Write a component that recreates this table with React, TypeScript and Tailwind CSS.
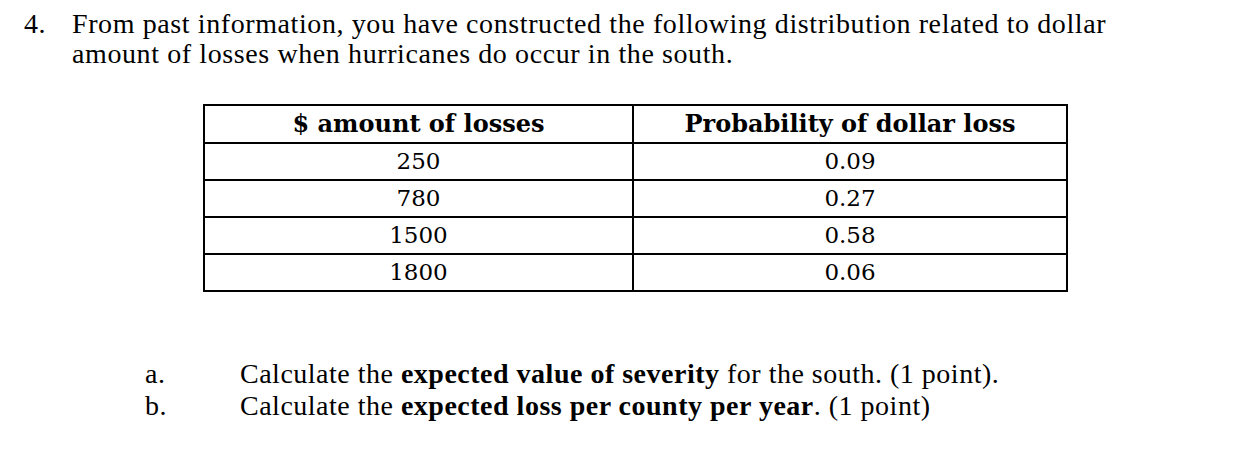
const rows = [
  ["250", "0.09"],
  ["780", "0.27"],
  ["1500", "0.58"],
  ["1800", "0.06"],
];

const App = () => {
  return (
    <div
      className="w-[1250px] h-[452px] bg-white text-black overflow-hidden"
      style={{ fontFamily: '"Liberation Serif", "DejaVu Serif", serif' }}
    >
      {/* question */}
      <div className="flex pt-[9px] pl-[24px] text-[28px] leading-[30px] tracking-[0.6px]">
        <div className="w-[48px]">4.</div>
        <div>
          From past information, you have constructed the following distribution related to dollar
          <br />
          amount of losses when hurricanes do occur in the south.
        </div>
      </div>

      {/* table */}
      <div className="ml-[203px] mt-[35px] w-[865px] border-2 border-black">
        <div className="flex h-[36px] items-center text-[24px] font-bold font-['DejaVu_Serif']">
          <div className="w-[427px] text-center">$ amount of losses</div>
          <div className="flex-1 self-stretch flex items-center justify-center border-l-2 border-black">
            Probability of dollar loss
          </div>
        </div>
        {rows.map(([amt, p]) => (
          <div
            key={amt}
            className="flex h-[37px] border-t-2 border-black text-[23px] font-['DejaVu_Serif']"
          >
            <div className="w-[427px] flex items-center justify-center">{amt}</div>
            <div className="flex-1 flex items-center justify-center border-l-2 border-black">{p}</div>
          </div>
        ))}
      </div>

      {/* parts */}
      <div className="mt-[66px] pl-[145px] text-[28px] leading-[32px] tracking-[0.5px]">
        <div className="flex">
          <div className="w-[95px]">a.</div>
          <div>
            Calculate the <b>expected value of severity</b> for the south. (1 point).
          </div>
        </div>
        <div className="flex">
          <div className="w-[95px]">b.</div>
          <div>
            Calculate the <b>expected loss per county per year</b>. (1 point)
          </div>
        </div>
      </div>
    </div>
  );
};

export default App;
